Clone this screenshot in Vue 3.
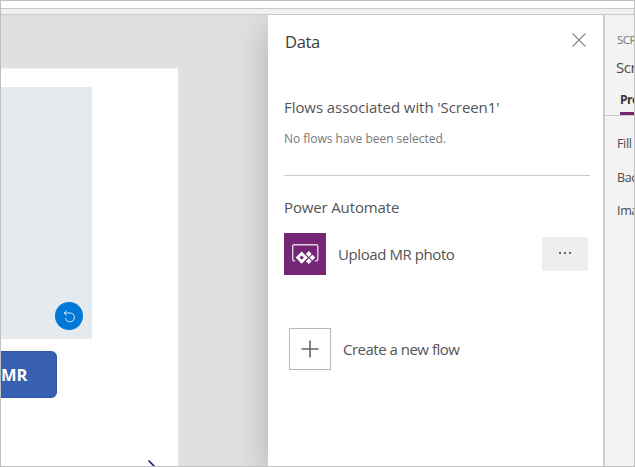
<script setup>
const properties = ['Fill', 'Background image', 'Image position']
</script>

<template>
  <div class="window">
    <div class="ribbon"></div>
    <div class="formula"></div>
    <div class="workspace">
      <main class="canvas">
        <div class="screen">
          <div class="photo">
            <button class="undo" aria-label="Undo">
              <svg width="28" height="28" viewBox="0 0 28 28" fill="none" stroke="#d5eaf9" stroke-width="1">
                <path d="M9.2 11H15a4.4 4.4 0 1 1-4.4 5M11.7 8.6 9 11l2.7 2.4" />
              </svg>
            </button>
          </div>
          <button class="mr">MR</button>
          <svg class="stroke" width="10" height="7" viewBox="0 0 10 7">
            <path d="M.5 .5 8 8" stroke="#00126b" stroke-width="1.5" />
          </svg>
        </div>
      </main>
      <section class="panel">
        <header class="head">
          <h1><span class="t-data">Data</span></h1>
          <svg width="14" height="14" viewBox="0 0 14 14" stroke="#868686" stroke-width="1.1">
            <path d="M.5 .5l13 13M13.5 .5l-13 13" />
          </svg>
        </header>
        <h2 class="associated"><span class="t-assoc">Flows associated with 'Screen1'</span></h2>
        <p class="empty"><span class="t-empty">No flows have been selected.</span></p>
        <h2 class="automate"><span class="t-auto">Power Automate</span></h2>
        <div class="flow">
          <svg class="logo" width="42" height="42" viewBox="0 0 42 42">
            <rect width="42" height="42" fill="#742774" />
            <path d="M11 27.7H10a1.3 1.3 0 0 1-1.3-1.3V13.3a1.5 1.5 0 0 1 1.5-1.5h22.1a1.5 1.5 0 0 1 1.5 1.5v13.1a1.3 1.3 0 0 1-1.3 1.3H31" fill="none" stroke="#e2d0e2" stroke-width="1.4" />
            <path d="M17.7 20.5l4.1 4.1-4.1 4.1-4.1-4.1z" fill="none" stroke="#fff" stroke-width="2.8" />
            <path d="M24.8 18.1l2.9 2.9-2.9 2.9-2.9-2.9zM28.4 21.7l2.9 2.9-2.9 2.9-2.9-2.9zM24.8 25.3l2.9 2.9-2.9 2.9-2.9-2.9z" fill="#fff" />
          </svg>
          <span class="label t-upload">Upload MR photo</span>
          <button class="more" aria-label="More"><i></i><i></i><i></i></button>
        </div>
        <div class="create">
          <span class="plus">
            <svg width="18" height="18" viewBox="0 0 18 18" stroke="#666" stroke-width="1.6">
              <path d="M9 .5v17M.5 9h17" />
            </svg>
          </span>
          <span class="label t-create">Create a new flow</span>
        </div>
      </section>
      <aside class="side">
        <div class="kind">SCREEN</div>
        <div class="name">Screen1</div>
        <div class="tabs"><span class="tab">Properties</span></div>
        <div v-for="p in properties" :key="p" class="prop">{{ p }}</div>
      </aside>
    </div>
  </div>
</template>

<style>
body { overflow: hidden; }
</style>

<style scoped>
* { box-sizing: border-box; margin: 0; font-weight: 400; }
button { border: 0; padding: 0; font-family: inherit; }
svg { display: block; flex: none; }
.window {
  width: 635px; height: 467px; border: 1px solid #c0c0c0; overflow: hidden;
  display: flex; flex-direction: column; background: #fff;
  font-family: "Open Sans", "Noto Sans", sans-serif; color: #555; white-space: nowrap;
}
.ribbon { height: 8px; flex: none; border-bottom: 1px solid #c8c8c8; }
.formula { height: 6px; flex: none; background: #f0f0f0; border-bottom: 1px solid #cacaca; }
.workspace { flex: 1; display: flex; min-height: 0; }
.canvas { width: 267px; flex: none; padding-top: 53px; background: #e0e0e0; overflow: hidden; }
.screen { width: 177px; height: 398px; padding-top: 18px; background: #fff; border-top: 1px solid #f3f3f3; display: flex; flex-direction: column; }
.photo { width: 91px; height: 252px; flex: none; background: #e5eaee; display: flex; align-items: flex-end; justify-content: flex-end; padding: 0 9px 9.5px 0; }
.undo { width: 28px; height: 28px; border-radius: 50%; background: #0078d7; }
.mr { width: 56px; height: 47px; flex: none; margin-top: 12px; border-radius: 0 6px 6px 0; background: #3860b2; border: 1px solid #3156a2; border-left: 0; color: #fff; font-size: 16.5px; font-weight: 700; text-align: left; }
.stroke { margin: 62px 0 0 147px; }
.panel { width: 335px; flex: none; padding: 0 13px 0 16px; background: #fff; position: relative; box-shadow: 0 10px 32px rgba(0, 0, 0, .22); clip-path: inset(0 0 0 -60px); }
.head { height: 54px; display: flex; align-items: center; justify-content: space-between; padding-right: 4px; }
.head svg { margin-top: -5px; }
.head h1 { font-size: 16.5px; line-height: 54px; color: #3c3c3c; padding-left: 1px; }
h2 { font-size: 15px; }
.associated { height: 46px; line-height: 46px; margin-top: 15px; margin-bottom: -15px; }
.empty { height: 61px; padding-top: 14px; font-size: 12px; line-height: 20px; color: #777; border-bottom: 1px solid #cacaca; }
.automate { height: 57px; padding-top: 21px; line-height: 20px; }
.flow { height: 42px; display: flex; align-items: center; padding-right: 2px; }
.label { font-size: 15px; margin-left: 12px; }
.more { width: 46px; height: 34px; margin-left: auto; border-radius: 2px; background: #eee; display: flex; align-items: center; justify-content: center; gap: 3px; padding-bottom: 2px; }
.more i { width: 2px; height: 2px; background: #666; }
.create { display: flex; align-items: center; margin: 53px 0 0 5px; }
.plus { width: 42px; height: 42px; border: 1px solid #b8b8b8; display: flex; align-items: center; justify-content: center; }
.side { width: 31px; flex: none; background: #f3f3f3; border-left: 2px solid #cacaca; overflow: hidden; font-size: 12.5px; color: #4a4a4a; }
.kind { height: 18px; margin: 16px 0 0 12px; line-height: 18px; font-size: 11.5px; color: #777; letter-spacing: -.5px; }
.name { height: 24px; margin: 6px 0 0 11px; line-height: 24px; font-size: 15px; letter-spacing: -.5px; }
.tabs { height: 37px; padding: 9px 0 0 15px; border-bottom: 1px solid #cacaca; }
.tab { display: block; height: 27px; line-height: 24px; font-weight: 700; font-size: 12px; color: #333; border-bottom: 3px solid #742774; letter-spacing: -.5px; }
.prop { height: 34px; line-height: 34px; padding-left: 12px; letter-spacing: -.35px; }
.tabs + .prop { margin-top: 11px; }
.prop:last-child { margin-top: -1px; }
.t-data { letter-spacing: -.3px; }
.t-assoc { letter-spacing: -.07px; }
.t-empty { letter-spacing: -.02px; }
.t-auto { letter-spacing: -.14px; }
.t-upload { letter-spacing: -.42px; }
.t-create { letter-spacing: -.5px; }
</style>
